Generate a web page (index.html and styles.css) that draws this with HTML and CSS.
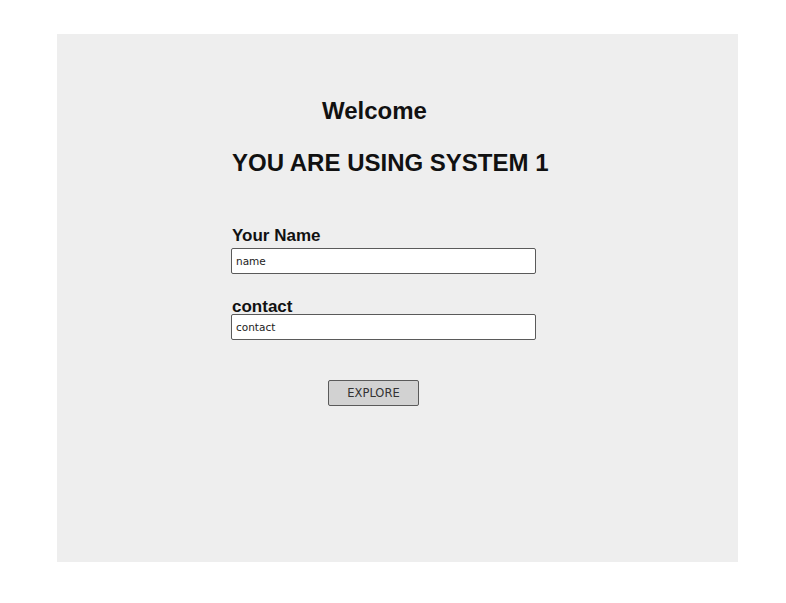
FILE: index.html
```html
<!DOCTYPE html>
<html>
<head>
<meta charset="utf-8">
<link rel="stylesheet" href="styles.css">
</head>
<body>
<div class="page">
  <main class="panel">
    <h1 class="welcome">Welcome</h1>
    <h2 class="system">YOU ARE USING SYSTEM 1</h2>
    <form class="form">
      <label class="label label-name">Your Name</label>
      <div class="input">name</div>
      <label class="label label-contact">contact</label>
      <div class="input">contact</div>
      <div class="actions"><button type="button" class="btn">EXPLORE</button></div>
    </form>
  </main>
</div>
</body>
</html>
```
FILE: styles.css
```css
html, body {
  margin: 0;
  padding: 0;
  background: #ffffff;
}
.page {
  padding: 34px 0 0 57px;
}
.panel {
  box-sizing: border-box;
  width: 681px;
  height: 528px;
  background: #eeeeee;
  padding: 63px 0 0 175px;
  font-family: "Liberation Sans", Arial, sans-serif;
  color: #111;
}
.welcome {
  margin: 0 0 0 90px;
  font-size: 24px;
  line-height: 28px;
  font-weight: bold;
}
.system {
  margin: 23px 0 0 0;
  font-size: 24px;
  line-height: 30px;
  font-weight: bold;
}
.form {
  display: flex;
  flex-direction: column;
  align-items: flex-start;
  margin-top: 48px;
}
.label {
  display: block;
  font-size: 17px;
  line-height: 20px;
  font-weight: bold;
}
.label-name {
  margin-bottom: 2px;
}
.label-contact {
  margin-top: 23px;
  margin-bottom: -3px;
}
.input {
  box-sizing: border-box;
  width: 305px;
  height: 26px;
  margin-left: -1px;
  background: #ffffff;
  border: 1.5px solid #5a5a5a;
  border-radius: 2px;
  padding: 1px 0 0 4px;
  font-family: "DejaVu Sans", sans-serif;
  font-size: 10.5px;
  line-height: 23px;
  color: #222;
}
.actions {
  margin-top: 40px;
  margin-left: 96px;
}
.btn {
  box-sizing: border-box;
  width: 91px;
  height: 26px;
  background: #d2d2d2;
  border: 1.5px solid #5a5a5a;
  border-radius: 2px;
  font-family: "DejaVu Sans", sans-serif;
  font-size: 11.5px;
  color: #333;
  padding: 0;
  margin: 0;
}
```
